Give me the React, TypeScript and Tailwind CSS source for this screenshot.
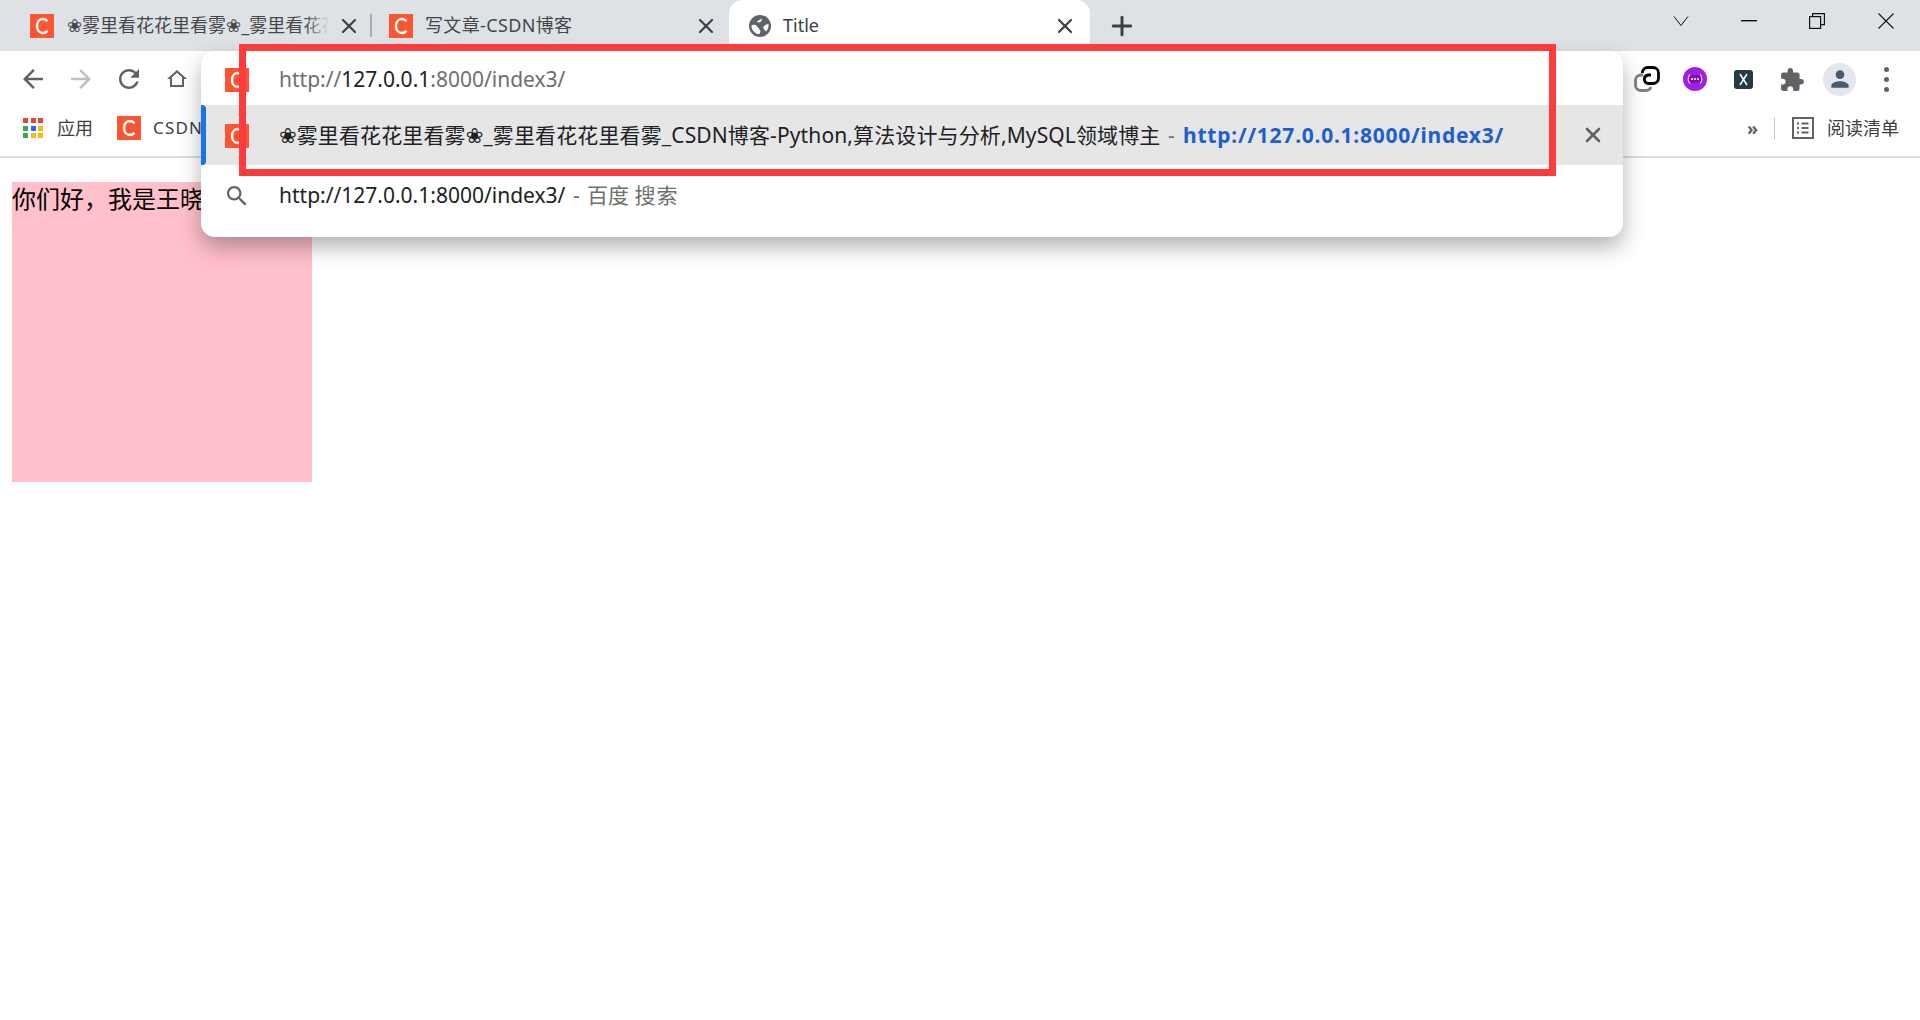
import { Plus, X } from "lucide-react";

const uiFont = "font-['Noto_Sans','DejaVu_Sans','Noto_Sans_CJK_SC',sans-serif]";

function CsdnIcon() {
  return (
    <svg width="24" height="24" viewBox="0 0 24 24" className="shrink-0">
      <rect width="24" height="24" fill="#fc5531" />
      <path d="M17.500 7.200C16.300 5.600 14.700 5 13 5c-3.600 0-6 3-6 7s2.400 7 6 7c1.700 0 3.300-.6 4.500-2.200" fill="none" stroke="#fff" strokeWidth="2.400" />
    </svg>
  );
}

function GlobeIcon() {
  return (
    <svg width="24" height="24" viewBox="0 0 24 24" className="shrink-0">
      <circle cx="12" cy="12" r="11" fill="#5f6368" />
      <path fill="#fff" d="M3.500 11.500c1.800-1.300 4-1 5.300.6 1.200 1.400 2.200 2.800 3.200 4.200.8 1.200.2 2.700-.8 3.900-3.900-.4-7-3.500-7.700-7.200v-1.500zM20.500 10c.4 3-.6 5.500-2.300 7.300-1.200-.8-2.400-2-2.800-3.400-.5-1.800 2.500-3.700 5.100-3.900zM9 7.500c1.500-1 3-1.600 4.500-3 .6.900.2 2.300-.8 3.300-1 .9-2.800 1-3.700-.3z" />
    </svg>
  );
}

function AppsIcon() {
  const colors = ["#ea4335", "#ea4335", "#ea4335", "#34a853", "#1a73e8", "#fbbc04", "#34a853", "#fbbc04", "#fbbc04"];
  return (
    <div className="grid grid-cols-[repeat(3,5px)] gap-[2.5px] shrink-0">
      {colors.map((c, i) => (
        <span key={i} className="w-[5px] h-[5px]" style={{ backgroundColor: c }} />
      ))}
    </div>
  );
}

function Tab({ title, left, w, textGap, faded, divider, spacing }: { title: string; left: number; w: number; textGap: number; faded?: boolean; divider?: boolean; spacing?: number }) {
  return (
    <div className="relative h-full flex items-center shrink-0" style={{ width: w, paddingLeft: left }}>
      <CsdnIcon />
      <span className="relative flex-1 min-w-0 overflow-hidden whitespace-nowrap text-[18px] text-[#45474a]" style={{ marginLeft: textGap, letterSpacing: spacing }}>
        {title}
        {faded && <span className="absolute right-0 top-0 bottom-0 w-[24px] bg-gradient-to-r from-transparent to-[#dee1e6]" />}
      </span>
      <X className="ml-[8px] mr-[11px] shrink-0 text-[#3c4043]" size={24} strokeWidth={2.2} />
      {divider && <span className="absolute right-0 top-[14px] bottom-[14px] w-[2px] bg-[#a9abae]" />}
    </div>
  );
}

export default function App() {
  return (
    <div className={`relative min-h-[1020px] bg-white overflow-hidden ${uiFont}`}>
      {/* Tab strip */}
      <div className="h-[51px] bg-[#dee1e6] flex items-center pl-[12px]">
        <Tab title="❀雾里看花花里看雾❀_雾里看花花" left={18} w={360} textGap={13} faded divider />
        <Tab title="写文章-CSDN博客" left={17} w={357} textGap={12} spacing={0.35} />
        <div className="h-full w-[361px] bg-white rounded-t-[14px] flex items-center pl-[19px] shrink-0">
          <GlobeIcon />
          <span className="ml-[11px] flex-1 text-[18px] text-[#3c4043]">Title</span>
          <X className="mr-[13px] text-[#3c4043]" size={24} strokeWidth={2.2} />
        </div>
        <Plus className="ml-[17px] text-[#3c4043]" size={30} strokeWidth={2.4} />
        <div className="ml-auto self-start h-[42px] flex items-center text-[#111]">
          <svg width="18" height="12" viewBox="0 0 18 12" fill="none" stroke="currentColor" strokeWidth="1"><path d="M2 1.500l7 9 7-9" /></svg>
          <svg width="16" height="2" className="ml-[51px]"><rect width="16" height="1.400" fill="currentColor" /></svg>
          <svg width="16" height="16" viewBox="0 0 16 16" fill="none" stroke="currentColor" strokeWidth="1.200" className="ml-[52px]"><rect x="0.600" y="3.600" width="11" height="11.800" /><path d="M3.600 3.500V.6h11.800v11h-3.300" /></svg>
          <svg width="16" height="16" viewBox="0 0 16 16" fill="none" stroke="currentColor" strokeWidth="1.100" className="ml-[53px] mr-[26px]"><path d="M.5.5l15 15M15.500.5l-15 15" /></svg>
        </div>
      </div>

      {/* Toolbar */}
      <div className="h-[52px] pt-[4px] flex items-center justify-between pl-[18px] pr-[31px]">
        <div className="flex items-center">
          <svg width="30" height="30" viewBox="0 0 24 24" fill="#5f6368"><path d="M20 11H7.830l5.590-5.590L12 4l-8 8 8 8 1.410-1.410L7.830 13H20v-2z" /></svg>
          <svg width="30" height="30" viewBox="0 0 24 24" fill="#bdc1c6" className="ml-[18px]"><path d="M4 11h12.170l-5.590-5.590L12 4l8 8-8 8-1.410-1.410L16.170 13H4v-2z" /></svg>
          <svg width="30" height="30" viewBox="0 0 24 24" className="ml-[18px]" fill="#5f6368"><path d="M17.650 6.350C16.200 4.900 14.210 4 12 4c-4.420 0-7.990 3.580-7.990 8s3.570 8 7.990 8c3.730 0 6.840-2.550 7.730-6h-2.080c-.82 2.330-3.040 4-5.650 4-3.310 0-6-2.690-6-6s2.690-6 6-6c1.660 0 3.140.69 4.220 1.780L13 11h7V4l-2.350 2.350z" /></svg>
          <svg width="24" height="24" viewBox="0 0 24 24" className="ml-[21px]" fill="#5f6368"><path fillRule="evenodd" d="M12 3L2 12h3v8h14v-8h3L12 3zm0 2.700l5 4.500V18H7v-7.800l5-4.500z" /></svg>
        </div>
        <div className="flex items-center">
          {/* Linked rings */}
          <svg width="26" height="26" viewBox="0 0 26 26" fill="none" strokeWidth="2.800">
            <path d="M9 9H7a5.500 5.500 0 0 0-5.500 5.500V19A5.500 5.500 0 0 0 7 24.500h5a5.500 5.500 0 0 0 5-3.500" stroke="#808080" />
            <path d="M8.500 7a5 5 0 0 1 5-5.500H19A5.500 5.500 0 0 1 24.500 7v5a5.500 5.500 0 0 1-5.500 5.500h-5a4.300 4.300 0 0 1 0-8.500h3" stroke="#050505" />
          </svg>
          {/* Purple extension */}
          <svg width="24" height="24" viewBox="0 0 24 24" className="ml-[23px]">
            <circle cx="12" cy="12" r="12" fill="#a11fe0" />
            <rect x="6" y="8" width="12" height="8" rx="2" fill="#7a12b0" />
            <path d="M7 7.500C4.500 10 4.500 14 7 16.500M17 7.500c2.500 2.500 2.500 6.500 0 9" stroke="#e9c3fa" strokeWidth="1.200" fill="none" />
            <circle cx="9" cy="12" r="1" fill="#fff" /><circle cx="12" cy="12" r="1" fill="#fff" /><circle cx="15" cy="12" r="1" fill="#fff" />
          </svg>
          {/* X tile */}
          <svg width="19" height="19" viewBox="0 0 19 19" className="ml-[27px]">
            <rect width="19" height="19" rx="3" fill="#243a44" />
            <path d="M6 4l7 11M13 4L6 15" stroke="#fff" strokeWidth="1.500" />
          </svg>
          {/* Puzzle */}
          <svg width="25" height="25" viewBox="1 0 23 23" className="ml-[27px]" fill="#5f6368"><path d="M20.500 11H19V7c0-1.100-.9-2-2-2h-4V3.500C13 2.120 11.880 1 10.500 1S8 2.120 8 3.500V5H4c-1.100 0-1.990.9-1.990 2v3.800H3.500c1.490 0 2.700 1.210 2.700 2.700s-1.210 2.700-2.700 2.700H2V20c0 1.100.9 2 2 2h3.800v-1.500c0-1.490 1.210-2.700 2.700-2.700 1.490 0 2.700 1.210 2.700 2.700V22H17c1.100 0 2-.9 2-2v-4h1.500c1.380 0 2.500-1.120 2.500-2.500S21.880 11 20.500 11z" /></svg>
          {/* Avatar */}
          <div className="ml-[18px] w-[33px] h-[33px] rounded-full bg-[#e3e6eb] flex items-center justify-center">
            <svg width="26" height="26" viewBox="0 0 24 24" fill="#4a5a72"><path d="M12 12c2.210 0 4-1.790 4-4s-1.790-4-4-4-4 1.790-4 4 1.790 4 4 4zm0 2c-2.670 0-8 1.340-8 4v2h16v-2c0-2.660-5.330-4-8-4z" /></svg>
          </div>
          {/* Menu dots */}
          <div className="ml-[28px] flex flex-col gap-[5px]">
            <span className="w-[5px] h-[5px] rounded-full bg-[#5f6368]" />
            <span className="w-[5px] h-[5px] rounded-full bg-[#5f6368]" />
            <span className="w-[5px] h-[5px] rounded-full bg-[#5f6368]" />
          </div>
        </div>
      </div>

      {/* Bookmarks bar */}
      <div className="h-[55px] border-b-2 border-[#dadce0] flex items-center pl-[23px] pr-[21px] pb-[3px]">
        <AppsIcon />
        <span className="ml-[14px] text-[18px] text-[#3c4043]">应用</span>
        <div className="ml-[24px]"><CsdnIcon /></div>
        <span className="ml-[12px] text-[17px] tracking-[1.2px] text-[#3c4043]">CSDN</span>
        <div className="ml-auto flex items-center">
          <span className="text-[18px] leading-none font-bold text-[#5f6368]">»</span>
          <span className="ml-[16px] w-px h-[23px] bg-[#c8cacd]" />
          <svg width="22" height="22" viewBox="0 0 22 22" className="ml-[17px]" fill="none" stroke="#5f6368" strokeWidth="2">
            <rect x="1" y="1" width="20" height="20" />
            <path d="M5 6.500h2M5 11h2M5 15.500h2M9.500 6.500h7M9.500 11h7M9.500 15.500h7" />
          </svg>
          <span className="ml-[13px] text-[18px] text-[#3c4043]">阅读清单</span>
        </div>
      </div>

      {/* Page content */}
      <div className="pt-[24px] pl-[12px]">
        <div className="w-[300px] h-[300px] bg-[#ffc0cb] text-[24px] leading-[32px] text-black font-['Noto_Sans_CJK_SC',sans-serif]">{"你们好\uFF0C我是王晓"}</div>
      </div>

      {/* Omnibox dropdown */}
      <div className="absolute left-[201px] top-[51px] w-[1422px] h-[186px] bg-white rounded-[14px] shadow-[0_10px_22px_rgba(0,0,0,0.3)] overflow-hidden">
        <div className="h-[54px] pt-[4px] flex items-center pl-[24px]">
          <CsdnIcon />
          <span className="ml-[30px] text-[21px] text-[#6e6e6e]">
            http://<span className="text-[#202124]">127.0.0.1</span>:8000/index3/
          </span>
        </div>
        <div className="relative h-[60px] pt-[1px] bg-[#e6e6e6] flex items-center pl-[24px]">
          <span className="absolute left-0 top-0 bottom-0 w-[5px] rounded-r-[4px] bg-[#1a73e8]" />
          <CsdnIcon />
          <span className="ml-[30px] text-[21px] text-[#202124] whitespace-nowrap">
            <span className="tracking-[0.12px]">❀雾里看花花里看雾❀_雾里看花花里看雾_CSDN博客-Python,算法设计与分析,MySQL领域博主</span>
            <span className="ml-[2px] text-[#6e6e6e]"> - </span>
            <span className="ml-[3px] font-bold tracking-[0.75px] text-[#1f5fcc]">http://127.0.0.1:8000/index3/</span>
          </span>
          <X className="absolute right-[18px] top-[18px] text-[#5f6368]" size={24} strokeWidth={2.6} />
        </div>
        <div className="h-[62px] flex items-center pl-[26px]">
          <svg width="20" height="20" viewBox="3 3 18 18" fill="#5f6368" className="shrink-0"><path d="M15.500 14h-.79l-.28-.27C15.410 12.590 16 11.110 16 9.500 16 5.910 13.090 3 9.500 3S3 5.910 3 9.500 5.910 16 9.500 16c1.610 0 3.090-.59 4.230-1.570l.27.280v.790l5 4.990L20.490 19l-4.990-5zm-6 0C7.010 14 5 11.990 5 9.500S7.010 5 9.500 5 14 7.010 14 9.500 11.990 14 9.500 14z" /></svg>
          <span className="ml-[32px] text-[21px] text-[#202124]">
            http://127.0.0.1:8000/index3/<span className="ml-[2px] text-[#6e6e6e]"> - <span className="ml-[2px]">百度</span> <span className="tracking-[0.8px]">搜索</span></span>
          </span>
        </div>
      </div>

      {/* Red annotation box */}
      <div className="absolute left-[239px] top-[44px] w-[1317px] h-[132px] border-[7px] border-[#ff3b3b] pointer-events-none" />
    </div>
  );
}
